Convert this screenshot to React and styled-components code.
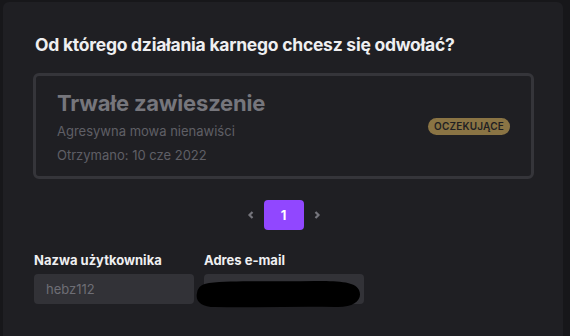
import React from 'react';
import styled, { createGlobalStyle } from 'styled-components';

const GlobalStyle = createGlobalStyle`
  html, body {
    margin: 0;
    padding: 0;
    background: #17171a;
    font-family: Inter, "Noto Sans", Roboto, sans-serif;
    -webkit-font-smoothing: antialiased;
  }
`;

const Page = styled.div`
  width: 570px;
  height: 336px;
  padding: 2px 7px 0 3px;
  box-sizing: border-box;
  overflow: hidden;
`;

const Panel = styled.div`
  background: #1f1f23;
  border-radius: 6px 6px 0 0;
  height: 100%;
  padding: 31px 29px 0 30px;
  box-sizing: border-box;
`;

const Title = styled.h2`
  margin: 0 0 16px 2px;
  color: #efeff1;
  font-size: 17.5px;
  font-weight: 700;
  letter-spacing: -0.25px;
  line-height: 24px;
`;

const Card = styled.div`
  border: 3px solid #35353a;
  border-radius: 6px;
  padding: 12px 21px 9px 21px;
  display: flex;
  align-items: center;
  justify-content: space-between;
`;

const CardInfo = styled.div`
  display: flex;
  flex-direction: column;
`;

const CardTitle = styled.div`
  color: #76767c;
  font-size: 22px;
  font-weight: 700;
  letter-spacing: -0.2px;
  line-height: 30px;
  margin-bottom: 1px;
`;

const CardLine = styled.div`
  color: #5f5f66;
  font-size: 13px;
  line-height: 24px;
`;

const Badge = styled.span`
  background: #8a7444;
  color: #1f1f23;
  font-size: 10px;
  font-weight: 600;
  letter-spacing: 0.2px;
  line-height: 17px;
  padding: 0 6px;
  border-radius: 9px;
  text-transform: uppercase;
  margin-top: -2px;
`;

const Pager = styled.div`
  display: flex;
  justify-content: center;
  align-items: center;
  gap: 8px;
  margin-top: 21px;
`;

const Arrow = styled.span`
  color: #75757c;
  display: flex;
  align-items: center;
  width: 10px;
  justify-content: center;
`;

const PageButton = styled.div`
  width: 40px;
  height: 30px;
  border-radius: 4px;
  background: ${({ active }) => (active ? '#9147ff' : 'transparent')};
  color: #fff;
  font-size: 13px;
  font-weight: 700;
  display: flex;
  align-items: center;
  justify-content: center;
`;

const Fields = styled.div`
  display: flex;
  gap: 10px;
  margin-top: 22px;
  margin-left: 1px;
`;

const Field = styled.div`
  display: flex;
  flex-direction: column;
  gap: 6px;
  position: relative;
`;

const Label = styled.label`
  color: #efeff1;
  font-size: 13px;
  font-weight: 700;
  line-height: 16px;
`;

const Input = styled.div`
  width: 160px;
  height: 30px;
  border-radius: 4px;
  background: #323237;
  color: #6e6e75;
  font-size: 13px;
  line-height: 30px;
  padding: 0 12px;
  box-sizing: border-box;
`;

const Redaction = styled.svg`
  position: absolute;
  left: -9px;
  top: 25px;
`;

const Chevron = ({ dir }) => (
  <svg width="8" height="10" viewBox="0 0 8 10">
    <path
      d={dir === 'left' ? 'M5.5 2 L2.5 5 L5.5 8' : 'M2.5 2 L5.5 5 L2.5 8'}
      fill="none"
      stroke="currentColor"
      strokeWidth="2.2"
    />
  </svg>
);

const App = () => (
  <Page>
    <GlobalStyle />
    <Panel>
      <Title>Od którego działania karnego chcesz się odwołać?</Title>
      <Card>
        <CardInfo>
          <CardTitle>Trwałe zawieszenie</CardTitle>
          <CardLine>Agresywna mowa nienawiści</CardLine>
          <CardLine>Otrzymano: 10 cze 2022</CardLine>
        </CardInfo>
        <Badge>Oczekujące</Badge>
      </Card>
      <Pager>
        <Arrow><Chevron dir="left" /></Arrow>
        <PageButton active>1</PageButton>
        <Arrow><Chevron dir="right" /></Arrow>
      </Pager>
      <Fields>
        <Field>
          <Label>Nazwa użytkownika</Label>
          <Input>hebz112</Input>
        </Field>
        <Field>
          <Label>Adres e-mail</Label>
          <Input />
          <Redaction width="170" height="34" viewBox="0 0 170 34">
            <path
              d="M14 6 C40 3 80 5 120 4 C140 4 160 4 164 13 C168 22 160 31 140 30 C100 29 60 31 20 30 C6 30 0 24 2 16 C3 9 8 7 14 6 Z"
              fill="#000"
            />
          </Redaction>
        </Field>
      </Fields>
    </Panel>
  </Page>
);

export default App;
